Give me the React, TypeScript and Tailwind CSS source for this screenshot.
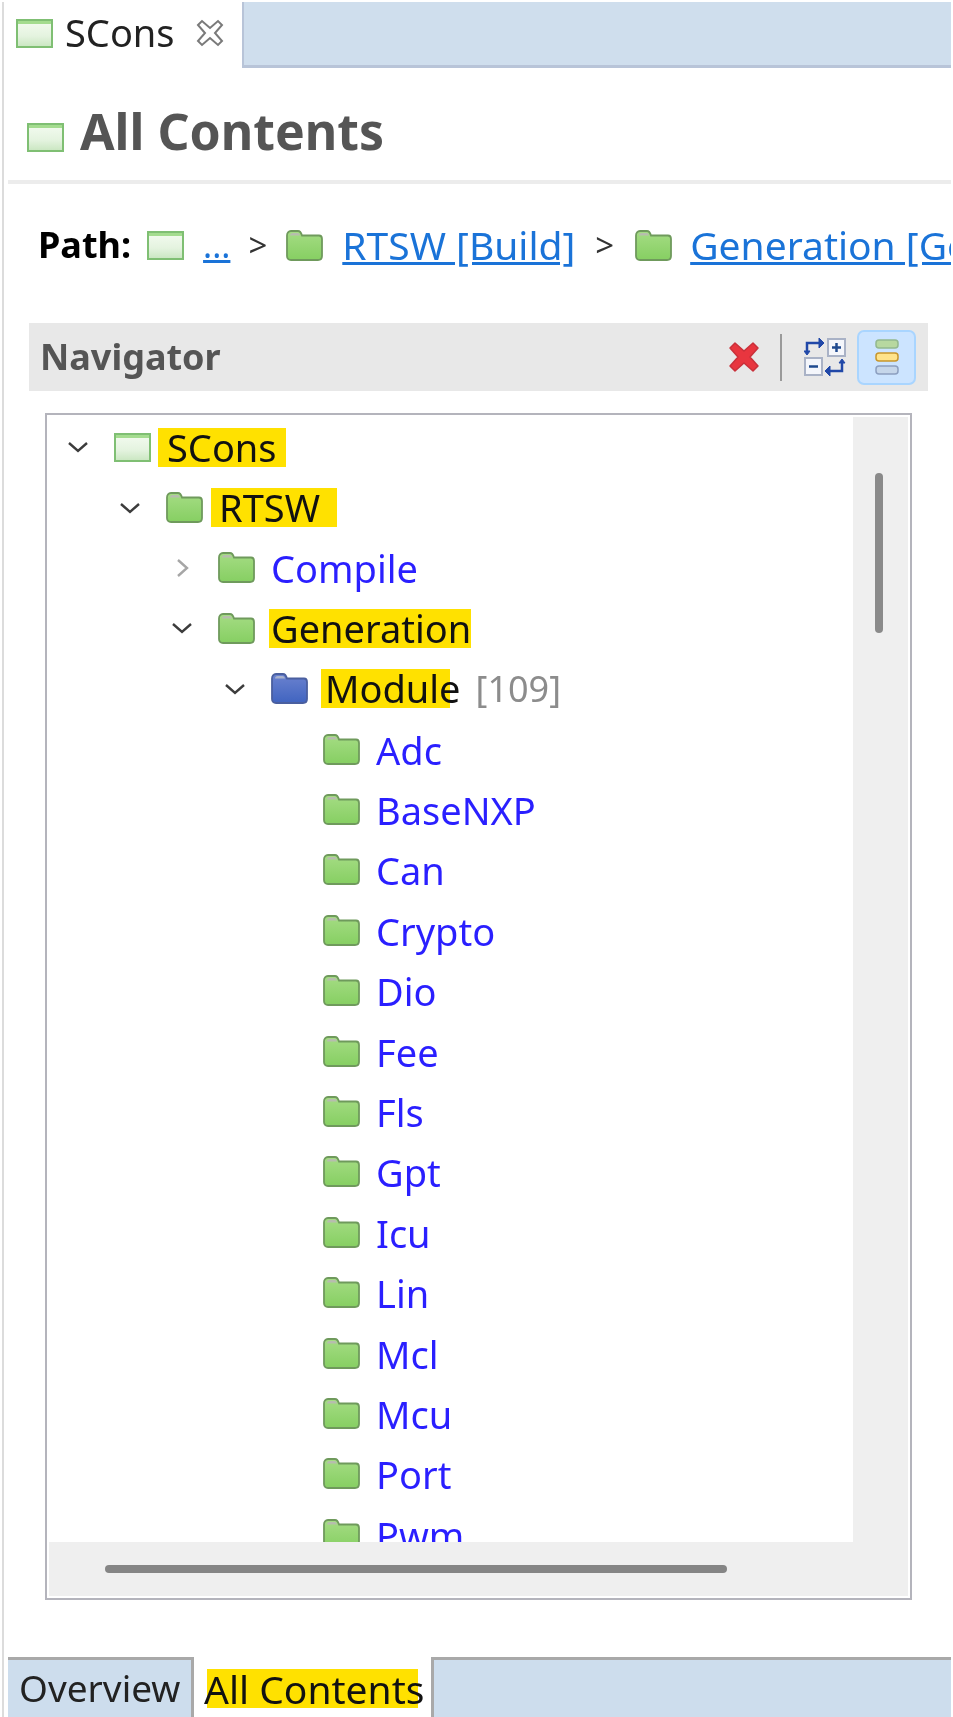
import React from "react";

const font = "font-['Noto_Sans','Open_Sans',sans-serif]";

function GreenRect({ className = "" }: { className?: string }) {
  return (
    <svg viewBox="0 0 37 29" className={`w-[37px] h-[29px] shrink-0 ${className}`}>
      <defs>
        <linearGradient id="gr" x1="0" y1="0" x2="0" y2="1">
          <stop offset="0" stopColor="#f4fbf1" />
          <stop offset="0.6" stopColor="#e4f3df" />
          <stop offset="1" stopColor="#c9e6c0" />
        </linearGradient>
      </defs>
      <rect x="1" y="1" width="35" height="27" fill="url(#gr)" stroke="#7fbf73" strokeWidth="2" />
      <rect x="2" y="2" width="33" height="3" fill="#a4dc8f" />
    </svg>
  );
}

function Folder({ blue = false }: { blue?: boolean }) {
  const id = blue ? "fb" : "fg";
  return (
    <svg viewBox="0 0 37 31" className="w-[37px] h-[31px] shrink-0">
      <defs>
        <linearGradient id={id} x1="0" y1="0" x2="0" y2="1">
          <stop offset="0" stopColor={blue ? "#6b82cf" : "#a5dc84"} />
          <stop offset="1" stopColor={blue ? "#4064c0" : "#86cf62"} />
        </linearGradient>
      </defs>
      <path
        d="M1 5.5C1 3 2.5 1 5 1h7c2 0 3 1 4 4.5h17c2 0 3 1.5 3 3.500V26c0 2.500-1.500 4-4 4H5c-2.500 0-4-1.500-4-4Z"
        fill={`url(#${id})`}
        stroke={blue ? "#4a5f9f" : "#6f9a5c"}
        strokeWidth="1.800"
      />
      <path d="M4 5.500c0-1.500 1-2.500 2.500-2.500h5c1.500 0 2 1 2.500 2.500Z" fill={blue ? "#a9b2cc" : "#b7bdae"} />
    </svg>
  );
}

function Chevron({ open = true, muted = false }: { open?: boolean; muted?: boolean }) {
  return (
    <span className="w-[22px] h-[22px] shrink-0 flex items-center justify-center">
      <svg viewBox="0 0 22 22" className="w-[22px] h-[22px]" fill="none">
        {open ? (
          <path d="M2 7l9 8 9-8" stroke="#3c3c3c" strokeWidth="2.400" />
        ) : (
          <path d="M7 3l9 8-9 8" stroke={muted ? "#a6a6a6" : "#3c3c3c"} strokeWidth="2.400" />
        )}
      </svg>
    </span>
  );
}

function Highlight({ children, cls }: { children: React.ReactNode; cls: string }) {
  return (
    <span className="inline-block h-[39px] leading-[39px] bg-[#ffe100] text-[#111]">
      <span className={`inline-block ${cls}`}>{children}</span>
    </span>
  );
}

const levels = ["pl-[19px]", "pl-[71px]", "pl-[123px]", "pl-[176px]", "pl-[228px]"];

function Row({
  level,
  chevron,
  icon,
  gap,
  children,
}: {
  level: number;
  chevron?: React.ReactNode;
  icon: React.ReactNode;
  gap: string;
  children: React.ReactNode;
}) {
  return (
    <div className={`h-[60.4px] shrink-0 flex items-center ${levels[level]}`}>
      <span className="w-[22px] shrink-0 flex justify-center">{chevron}</span>
      <span className="ml-[25px] shrink-0 flex">{icon}</span>
      <span className={`${gap} text-[38px] leading-[39px] whitespace-nowrap text-[#2a1fff] flex items-center`}>{children}</span>
    </div>
  );
}

const modules = ["Adc", "BaseNXP", "Can", "Crypto", "Dio", "Fee", "Fls", "Gpt", "Icu", "Lin", "Mcl", "Mcu", "Port", "Pwm"];

export default function App() {
  return (
    <div className={`w-[953px] h-[1717px] overflow-hidden bg-white pl-[2px] pr-[2px] pt-[2px] blur-[0.5px] ${font}`}>
      <div className="h-full flex flex-col border-l-2 border-[#dcdcdc]">
        {/* Editor tab */}
        <div className="h-[66px] shrink-0 flex">
          <div className="w-[238px] shrink-0 flex items-center pl-[12px] pb-[4px] bg-white">
            <GreenRect />
            <span className="ml-[12px] mb-[2px] text-[38px] leading-none text-[#222]">SCons</span>
            <svg viewBox="0 0 28 28" className="ml-[21px] w-[28px] h-[28px]" fill="#fff" stroke="#7a7a7a" strokeWidth="2">
              <path d="M2 6l4-4 8 7 8-7 4 4-7 8 7 8-4 4-8-7-8 7-4-4 7-8Z" />
            </svg>
          </div>
          <div className="flex-1 bg-[#cfdeed] border-b-[3px] border-l-2 border-[#b8c4d8]" />
        </div>

        {/* Form heading */}
        <div className="h-[112px] shrink-0 flex items-center pl-[23px] pt-[12px]">
          <GreenRect className="mt-[14px]" />
          <span className="ml-[16px] mt-[2px] text-[50px] leading-none font-bold text-[#555]">All Contents</span>
        </div>
        <div className="h-[4px] shrink-0 ml-[4px] bg-[#ececec]" />

        {/* Path */}
        <div className="mt-[19px] mb-[36px] h-[84px] shrink-0 flex items-center pl-[34px] text-[39px] overflow-hidden whitespace-nowrap">
          <span className="font-bold text-[36px] text-black">Path:</span>
          <GreenRect className="ml-[16px]" />
          <a className="ml-[19px] text-[34px] text-[#1a73d8] underline">...</a>
          <span className="ml-[18px] text-[#333] text-[33px]">&gt;</span>
          <span className="ml-[19px] flex"><Folder /></span>
          <a className="ml-[19px] text-[#1a73d8] underline">RTSW [Build]</a>
          <span className="ml-[20px] text-[#333] text-[33px]">&gt;</span>
          <span className="ml-[21px] flex"><Folder /></span>
          <a className="ml-[18px] text-[#1a73d8] underline">Generation [Generation]</a>
        </div>

        {/* Navigator section */}
        <div className="ml-[25px] mr-[23px] h-[68px] shrink-0 bg-[#e8e8e8] flex items-center pl-[11px] pr-[12px]">
          <span className="text-[36px] leading-none font-bold text-[#555]">Navigator</span>
          <svg viewBox="0 0 34 34" className="ml-auto w-[34px] h-[34px]">
            <path d="M3 8l5-5 9 8 9-8 5 5-8 9 8 9-5 5-9-8-9 8-5-5 8-9Z" fill="#e8363f" stroke="#c9303a" strokeWidth="1.500" strokeLinejoin="round" />
          </svg>
          <div className="ml-[19px] w-[2px] h-[47px] bg-[#9a9a9a]" />
          <svg viewBox="0 0 42 38" className="ml-[22px] w-[42px] h-[38px]" fill="none">
            <rect x="24" y="1" width="17" height="17" fill="#f4f6fb" stroke="#a9b2c6" strokeWidth="2" />
            <path d="M28 9.500h9M32.500 5v9" stroke="#1f4a8f" strokeWidth="2.500" />
            <rect x="1" y="20" width="17" height="17" fill="#f4f6fb" stroke="#a9b2c6" strokeWidth="2" />
            <path d="M5 28.500h9" stroke="#1f4a8f" strokeWidth="2.500" />
            <path d="M3 15V5h15" stroke="#2148a8" strokeWidth="2.500" />
            <path d="M15 0l5 5-5 5ZM0 13l3 4 3-4Z" fill="#2148a8" stroke="#2148a8" />
            <path d="M38 23v10H23" stroke="#2148a8" strokeWidth="2.500" />
            <path d="M26 28l-5 5 5 5ZM35 25l3-4 3 4Z" fill="#2148a8" stroke="#2148a8" />
          </svg>
          <div className="ml-[11px] w-[59px] h-[55px] rounded-[7px] bg-[#cce4ff] border-2 border-[#a9d5ff] flex items-center justify-center">
            <svg viewBox="0 0 24 37" className="w-[24px] h-[37px]">
              <rect x="1" y="1" width="22" height="8" rx="3" fill="#b7d8a0" stroke="#93b88f" strokeWidth="1.500" />
              <rect x="1" y="14" width="22" height="8" rx="3" fill="#ffe38a" stroke="#c7962d" strokeWidth="1.500" />
              <rect x="1" y="27" width="22" height="8" rx="3" fill="#c5d6ea" stroke="#8c9fc0" strokeWidth="1.500" />
            </svg>
          </div>
        </div>

        {/* Tree */}
        <div className="ml-[41px] mt-[22px] w-[867px] h-[1187px] shrink-0 border-2 border-[#b4b4bc] flex flex-col">
          <div className="flex-1 min-h-0 flex p-0 pt-[2px] pl-[1px] pr-[2px]">
            <div className="flex-1 min-w-0 overflow-hidden flex flex-col">
              <Row level={0} chevron={<Chevron />} icon={<GreenRect />} gap="ml-[7px]">
                <Highlight cls="pl-[9px] pr-[9px]">SCons</Highlight>
              </Row>
              <Row level={1} chevron={<Chevron />} icon={<Folder />} gap="ml-[8px]">
                <Highlight cls="pl-[8px] pr-[17px]">RTSW</Highlight>
              </Row>
              <Row level={2} chevron={<Chevron open={false} muted />} icon={<Folder />} gap="ml-[16px] mt-[2px]">
                Compile
              </Row>
              <Row level={2} chevron={<Chevron />} icon={<Folder />} gap="ml-[14px]">
                <Highlight cls="pl-[2px] pr-0">Generation</Highlight>
              </Row>
              <Row level={3} chevron={<Chevron />} icon={<Folder blue />} gap="ml-[13px]">
                <Highlight cls="pl-[4px] -mr-[11px]">Module</Highlight>
                <span className="ml-[26px] text-[36px] text-[#8c8c8c]">[109]</span>
              </Row>
              {modules.map((m) => (
                <Row key={m} level={4} icon={<Folder />} gap="ml-[16px] mt-[2px]">
                  {m}
                </Row>
              ))}
            </div>
            <div className="w-[55px] shrink-0 bg-[#efefef] pt-[56px] flex justify-center pl-[9px] pr-[13px]">
              <div className="w-[8px] h-[160px] rounded-full bg-[#8a8a8a]" />
            </div>
          </div>
          <div className="h-[54px] shrink-0 mx-[2px] mb-[2px] bg-[#efefef] flex items-center pl-[56px]">
            <div className="w-[622px] h-[8px] rounded-full bg-[#858585]" />
          </div>
        </div>

        {/* Bottom tabs */}
        <div className="mt-[57px] h-[60px] shrink-0 flex text-[39px] text-[#222]">
          <div className="ml-[4px] w-[186px] shrink-0 bg-[#cddded] border-t-[3px] border-r-[3px] border-[#a9a9a9] pl-[11px] text-[37px] leading-[56px]">
            Overview
          </div>
          <div className="w-[237px] shrink-0 pl-[13px] pt-[12px] flex items-start">
            <Highlight cls="-ml-[3px] -mr-[6px]">All Contents</Highlight>
          </div>
          <div className="flex-1 bg-[#cddded] border-t-[3px] border-l-[3px] border-[#a9a9a9]" />
        </div>
      </div>
    </div>
  );
}
